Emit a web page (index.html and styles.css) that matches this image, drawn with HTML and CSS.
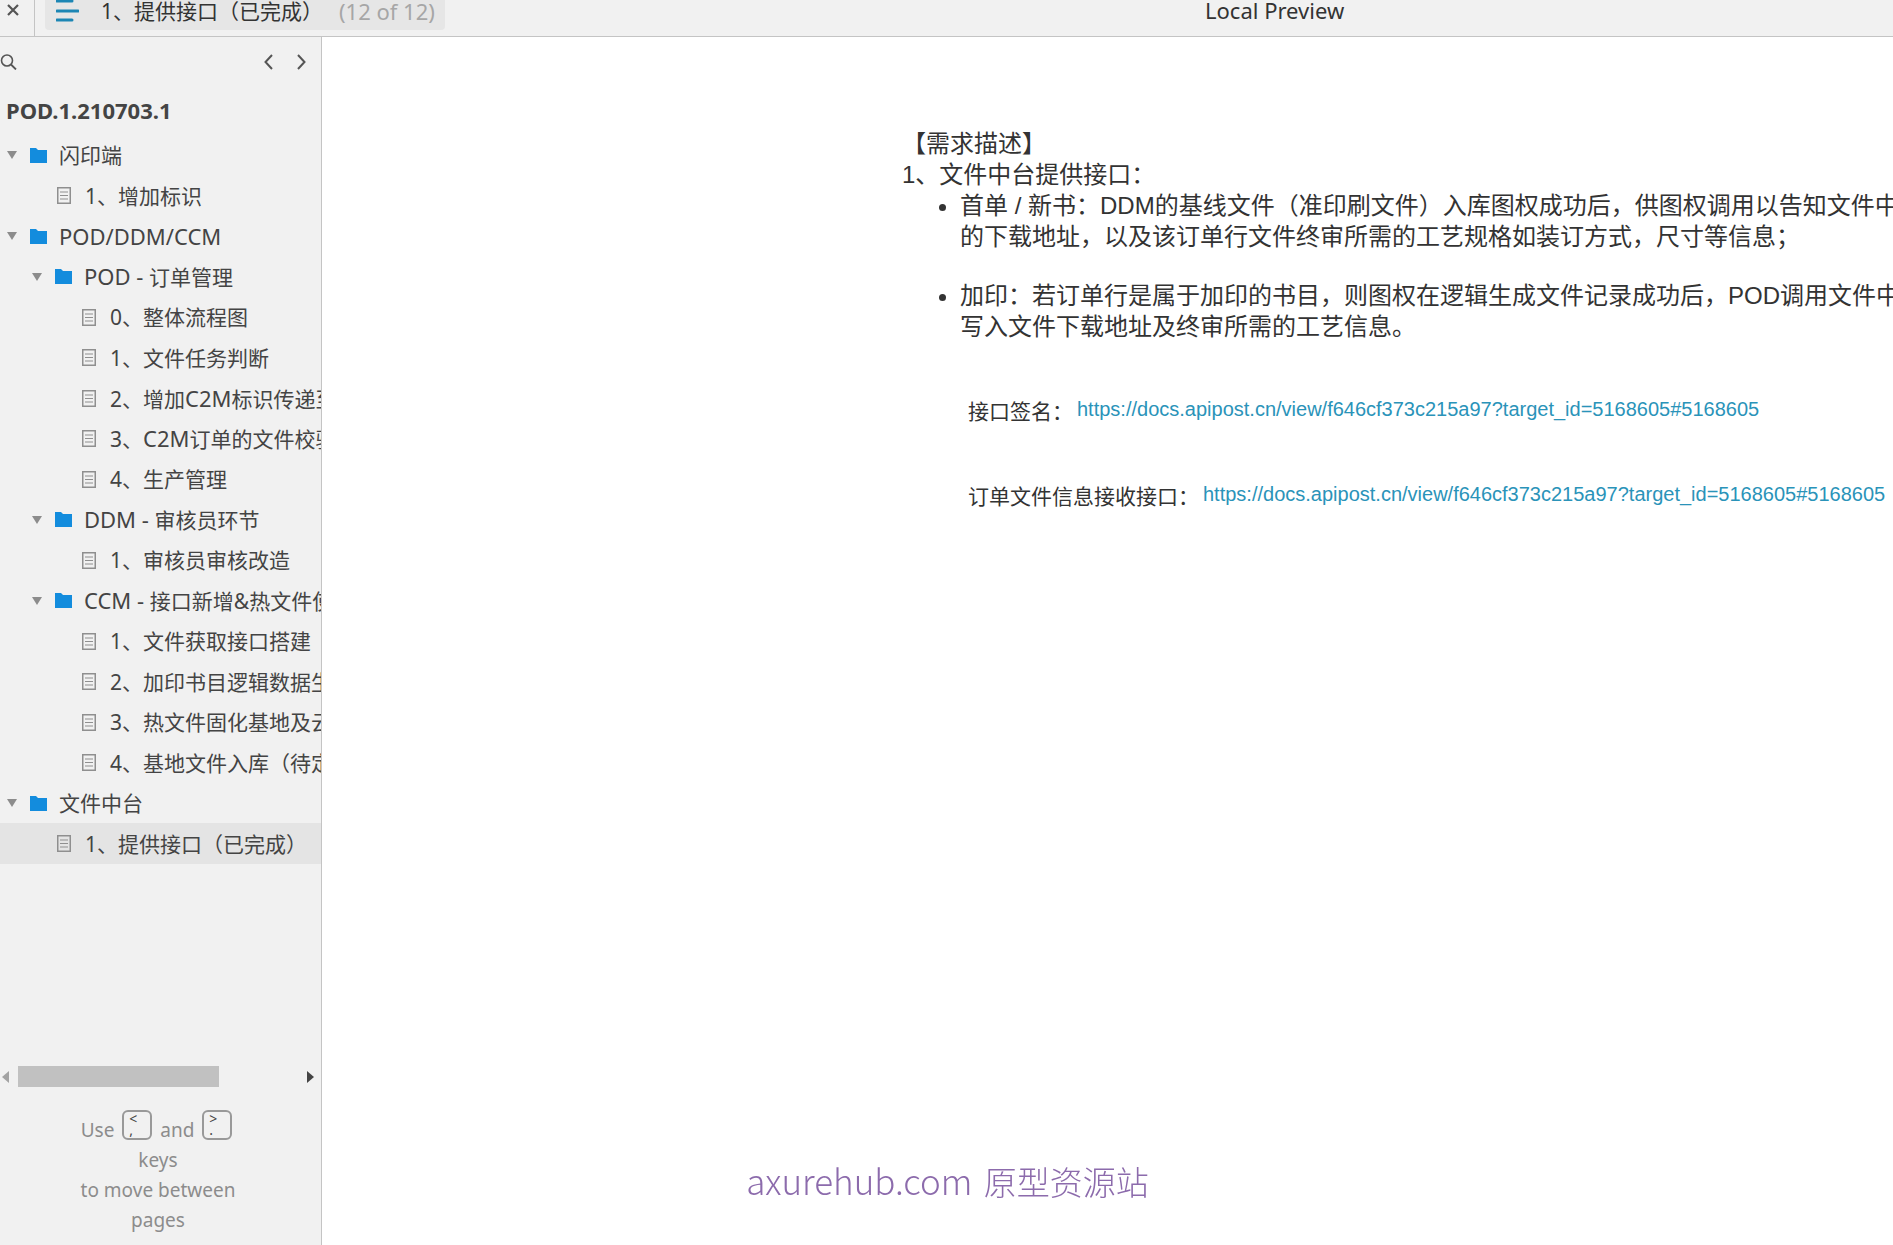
FILE: index.html
```html
<!DOCTYPE html>
<html lang="zh-CN">
<head>
<meta charset="utf-8">
<title>Local Preview</title>
<link rel="stylesheet" href="styles.css">
</head>
<body>
<svg class="defs" aria-hidden="true">
  <symbol id="arrow" viewBox="0 0 10 8"><path d="M0 0h10L5 8z" fill="#8c8c8c"/></symbol>
  <symbol id="folder" viewBox="0 0 17 15"><path d="M0 0h6l2 2h9v13H0z" fill="#138cdd"/></symbol>
  <symbol id="page" viewBox="0 0 14 17"><path d="M.75.75h12.500v15.500H.75z" fill="none" stroke="#8f8f8f" stroke-width="1.500"/><path d="M3 5h8M3 8.500h8M3 12h8" stroke="#8f8f8f" stroke-width="1.200"/></symbol>
</svg>
<header class="topbar">
  <button class="close" type="button" aria-label="Close"><svg width="12" height="12" viewBox="0 0 12 12"><path d="M1 1l10 10M11 1L1 11" stroke="#555" stroke-width="2.200"/></svg></button>
  <button class="current" type="button">
    <svg width="23" height="22" viewBox="0 0 23 22"><path d="M1 1h15M1 11h21M1 20h15" stroke="#1c86b4" stroke-width="3" stroke-linecap="round"/></svg>
    <span class="current-name">1、提供接口（已完成）</span>
    <span class="count en">(12 of 12)</span>
  </button>
  <span class="preview en">Local Preview</span>
</header>
<div class="body">
  <aside class="sidebar">
    <div class="tools">
      <button type="button" aria-label="Search"><svg width="17" height="16" viewBox="0 0 17 16"><circle cx="7" cy="6.500" r="5.500" fill="none" stroke="#555" stroke-width="1.600"/><path d="M11 10.500l5 5" stroke="#555" stroke-width="1.800"/></svg></button>
      <button class="prev" type="button" aria-label="Previous page"><svg width="9" height="16" viewBox="0 0 9 16"><path d="M8 1L1.500 8 8 15" fill="none" stroke="#555" stroke-width="2"/></svg></button>
      <button type="button" aria-label="Next page"><svg width="9" height="16" viewBox="0 0 9 16"><path d="M1 1l6.500 7L1 15" fill="none" stroke="#555" stroke-width="2"/></svg></button>
    </div>
    <h1 class="project">POD.1.210703.1</h1>
    <ul class="tree">
      <li class="folder"><svg class="arrow"><use href="#arrow"/></svg><svg class="icon"><use href="#folder"/></svg><span>闪印端</span></li>
      <li class="page in1"><svg class="icon"><use href="#page"/></svg><span>1、增加标识</span></li>
      <li class="folder"><svg class="arrow"><use href="#arrow"/></svg><svg class="icon"><use href="#folder"/></svg><span class="en">POD/DDM/CCM</span></li>
      <li class="folder in1"><svg class="arrow"><use href="#arrow"/></svg><svg class="icon"><use href="#folder"/></svg><span><span class="en">POD - </span>订单管理</span></li>
      <li class="page in2"><svg class="icon"><use href="#page"/></svg><span>0、整体流程图</span></li>
      <li class="page in2"><svg class="icon"><use href="#page"/></svg><span>1、文件任务判断</span></li>
      <li class="page in2"><svg class="icon"><use href="#page"/></svg><span>2、增加<span class="en">C2M</span>标识传递至</span></li>
      <li class="page in2"><svg class="icon"><use href="#page"/></svg><span>3、<span class="en">C2M</span>订单的文件校验</span></li>
      <li class="page in2"><svg class="icon"><use href="#page"/></svg><span>4、生产管理</span></li>
      <li class="folder in1"><svg class="arrow"><use href="#arrow"/></svg><svg class="icon"><use href="#folder"/></svg><span><span class="en">DDM - </span>审核员环节</span></li>
      <li class="page in2"><svg class="icon"><use href="#page"/></svg><span>1、审核员审核改造</span></li>
      <li class="folder in1"><svg class="arrow"><use href="#arrow"/></svg><svg class="icon"><use href="#folder"/></svg><span><span class="en">CCM - </span>接口新增&amp;热文件使</span></li>
      <li class="page in2"><svg class="icon"><use href="#page"/></svg><span>1、文件获取接口搭建</span></li>
      <li class="page in2"><svg class="icon"><use href="#page"/></svg><span>2、加印书目逻辑数据生</span></li>
      <li class="page in2"><svg class="icon"><use href="#page"/></svg><span>3、热文件固化基地及云</span></li>
      <li class="page in2"><svg class="icon"><use href="#page"/></svg><span>4、基地文件入库（待定</span></li>
      <li class="folder"><svg class="arrow"><use href="#arrow"/></svg><svg class="icon"><use href="#folder"/></svg><span>文件中台</span></li>
      <li class="page in1 selected"><svg class="icon"><use href="#page"/></svg><span>1、提供接口（已完成）</span></li>
    </ul>
    <div class="scroll">
      <svg width="7" height="12" viewBox="0 0 7 12"><path d="M7 0v12L0 6z" fill="#a3a3a3"/></svg>
      <div class="track"><div class="thumb"></div></div>
      <svg width="7" height="12" viewBox="0 0 7 12"><path d="M0 0v12l7-6z" fill="#444"/></svg>
    </div>
    <p class="hint">Use <kbd>&lt;<br>,</kbd> and <kbd>&gt;<br>.</kbd><br>keys<br>to move between<br>pages</p>
  </aside>
  <main class="canvas">
    <p>【需求描述】</p>
    <p>1、文件中台提供接口：</p>
    <ul class="points">
      <li>首单 / 新书：DDM的基线文件（准印刷文件）入库图权成功后，供图权调用以告知文件中<br>的下载地址，以及该订单行文件终审所需的工艺规格如装订方式，尺寸等信息；</li>
      <li>加印：若订单行是属于加印的书目，则图权在逻辑生成文件记录成功后，POD调用文件中<br>写入文件下载地址及终审所需的工艺信息。</li>
    </ul>
    <div class="api"><span>接口签名：</span><a href="https://docs.apipost.cn/view/f646cf373c215a97?target_id=5168605#5168605">https://docs.apipost.cn/view/f646cf373c215a97?target_id=5168605#5168605</a></div>
    <div class="api"><span>订单文件信息接收接口：</span><a href="https://docs.apipost.cn/view/f646cf373c215a97?target_id=5168605#5168605">https://docs.apipost.cn/view/f646cf373c215a97?target_id=5168605#5168605</a></div>
  </main>
</div>
<div class="watermark"><span class="domain">axurehub.com</span> 原型资源站</div>
</body>
</html>
```
FILE: styles.css
```css
* { box-sizing: border-box; }
body {
  margin: 0;
  min-height: 100vh;
  display: flex;
  flex-direction: column;
  overflow: hidden;
  font: 21px/30px "Noto Sans", "Noto Sans CJK SC", sans-serif;
  color: #444;
  background: #fff;
}
p, h1, ul { margin: 0; padding: 0; }
svg { display: block; flex: none; }
button { border: 0; padding: 0; background: none; font: inherit; color: inherit; }
.defs { position: absolute; width: 0; height: 0; }
.en { font-size: 22px; }

.topbar {
  display: flex;
  height: 37px;
  background: #f1f1f1;
  border-bottom: 1px solid #c4c4c4;
  color: #333;
  white-space: nowrap;
}
.close { width: 35px; padding: 0 0 16px 7px; border-right: 1px solid #c4c4c4; }
.current {
  display: flex;
  align-items: flex-start;
  width: 400px;
  height: 30px;
  margin-left: 10px;
  padding-left: 11px;
  background: #e6e6e6;
  border-radius: 0 0 4px 4px;
  line-height: 22px;
}
.current-name { margin-left: 22px; }
.count { margin-left: 16px; color: #a6a6a6; }
.preview { margin-left: 760px; line-height: 20px; }

.body { flex: 1; display: flex; }
.sidebar {
  flex: none;
  width: 322px;
  display: flex;
  flex-direction: column;
  background: #f1f1f1;
  border-right: 1px solid #c4c4c4;
}
.tools { display: flex; align-items: center; gap: 24px; height: 49px; padding-right: 15px; }
.prev { margin-left: auto; }
.project { height: 49px; padding: 9px 0 0 6px; font-size: 22px; line-height: 30px; font-weight: 700; }
.tree { list-style: none; overflow: hidden; white-space: nowrap; }
.tree li { display: flex; align-items: center; height: 40px; padding-left: 7px; }
.tree li:nth-child(even) { height: 41px; }
.tree li.in1 { padding-left: 32px; }
.tree li.page.in1 { padding-left: 57px; }
.tree li.page.in2 { padding-left: 82px; }
.tree li.selected { background: #e4e4e4; }
.arrow { width: 10px; height: 8px; margin-right: 13px; }
.icon { width: 17px; height: 15px; margin-right: 12px; }
.page .icon { width: 14px; height: 17px; margin-right: 14px; }
.scroll { display: flex; align-items: center; height: 21px; margin-top: auto; padding: 0 7px 0 2px; }
.track { flex: 1; height: 21px; padding-left: 9px; }
.thumb { width: 201px; height: 21px; background: #c1c1c1; }
.hint { padding: 23px 0 10px; margin-right: 5px; font-size: 19px; text-align: center; color: #8c8c8c; }
kbd {
  display: inline-block;
  width: 30px;
  height: 30px;
  margin: 0 3px;
  padding: 1px 0 0 5px;
  border: 2px solid #999;
  border-radius: 6px;
  font: 14px/11px "Noto Sans", sans-serif;
  text-align: left;
  vertical-align: 2px;
  color: #444;
}

.canvas {
  flex: 1;
  min-width: 0;
  overflow: hidden;
  padding: 91px 0 0 580px;
  font: 24px/31px "Liberation Sans", "Noto Sans CJK SC", sans-serif;
  color: #333;
  white-space: nowrap;
}
.points { padding-left: 58px; }
.points li + li { margin-top: 28px; }
.api { display: flex; gap: 4px; margin: 54px 0 0 66px; font-size: 21px; }
.api a { font-size: 20px; line-height: 26px; color: #2a93b9; text-decoration: none; }

.watermark {
  position: fixed;
  left: 2px;
  right: 0;
  bottom: 40px;
  font: 300 33px/48px "Noto Sans CJK SC", sans-serif;
  text-align: center;
  color: #8c6bac;
}
.domain { margin-right: 4px; font-size: 35px; }
```
